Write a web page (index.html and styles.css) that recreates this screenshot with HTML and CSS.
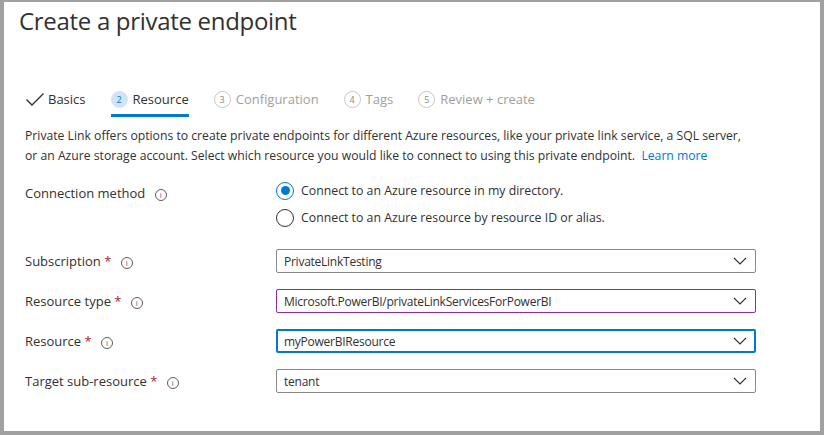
FILE: index.html
```html
<!DOCTYPE html>
<html>
<head>
<meta charset="utf-8">
<link rel="stylesheet" href="styles.css">
</head>
<body>
<div class="frame">
  <h1 class="title">Create a private endpoint</h1>
  <nav class="tabs">
    <div class="tab done">
      <svg class="check" width="20" height="16" viewBox="0 0 20 16"><path d="M1.5 8.5 L7 14 L18.5 2.5" fill="none" stroke="#323130" stroke-width="1.4"/></svg>
      <span>Basics</span>
    </div>
    <div class="tab active">
      <span class="num">2</span><span>Resource</span>
    </div>
    <div class="tab off">
      <span class="num">3</span><span>Configuration</span>
    </div>
    <div class="tab off">
      <span class="num">4</span><span>Tags</span>
    </div>
    <div class="tab off">
      <span class="num">5</span><span>Review + create</span>
    </div>
  </nav>
  <p class="desc">Private Link offers options to create private endpoints for different Azure resources, like your private link service, a SQL server, or an Azure storage account. Select which resource you would like to connect to using this private endpoint.&nbsp;&nbsp;<a class="link">Learn more</a></p>

  <div class="form">
    <div class="row row-radio">
      <div class="label">Connection method <span class="info">i</span></div>
      <div class="radios">
        <label class="radio"><span class="dot on"></span>Connect to an Azure resource in my directory.</label>
        <label class="radio"><span class="dot"></span>Connect to an Azure resource by resource ID or alias.</label>
      </div>
    </div>
    <div class="row">
      <div class="label">Subscription <span class="req">*</span> <span class="info">i</span></div>
      <div class="select"><span>PrivateLinkTesting</span><svg class="chev" width="14" height="8" viewBox="0 0 14 8"><path d="M1 1 L7 7 L13 1" fill="none" stroke="#323130" stroke-width="1.1"/></svg></div>
    </div>
    <div class="row">
      <div class="label">Resource type <span class="req">*</span> <span class="info">i</span></div>
      <div class="select purple"><span>Microsoft.PowerBI/privateLinkServicesForPowerBI</span><svg class="chev" width="14" height="8" viewBox="0 0 14 8"><path d="M1 1 L7 7 L13 1" fill="none" stroke="#323130" stroke-width="1.1"/></svg></div>
    </div>
    <div class="row">
      <div class="label">Resource <span class="req">*</span> <span class="info">i</span></div>
      <div class="select focus"><span>myPowerBIResource</span><svg class="chev" width="14" height="8" viewBox="0 0 14 8"><path d="M1 1 L7 7 L13 1" fill="none" stroke="#323130" stroke-width="1.1"/></svg></div>
    </div>
    <div class="row">
      <div class="label">Target sub-resource <span class="req">*</span> <span class="info">i</span></div>
      <div class="select"><span>tenant</span><svg class="chev" width="14" height="8" viewBox="0 0 14 8"><path d="M1 1 L7 7 L13 1" fill="none" stroke="#323130" stroke-width="1.1"/></svg></div>
    </div>
  </div>
</div>
</body>
</html>
```
FILE: styles.css
```css
* { box-sizing: border-box; }
html, body { margin: 0; padding: 0; }
body {
  width: 824px;
  height: 435px;
  background: #a0a0a0;
  font-family: "Open Sans", "Noto Sans", sans-serif;
  color: #323130;
  overflow: hidden;
}
.frame {
  margin: 2px 4px 0 4px;
  width: 816px;
  height: 429px;
  background: #fff;
  padding: 0 0 0 21px;
}
.title {
  margin: 0 0 0 -6px;
  padding-top: 3px;
  font-size: 24px;
  line-height: 32px;
  font-weight: 400;
  color: #323130;
  letter-spacing: -0.3px;
}
.tabs {
  display: flex;
  align-items: center;
  margin-top: 46px;
  height: 32px;
  font-size: 13px;
}
.tab {
  display: flex;
  align-items: center;
  height: 32px;
  margin-right: 25px;
  position: relative;
}
.tab .check { margin-right: 3px; }
.tab.active::after {
  content: "";
  position: absolute;
  left: 0; right: 0; bottom: -2px;
  height: 3px;
  background: #0078d4;
}
.num {
  display: inline-flex;
  align-items: center;
  justify-content: center;
  width: 17px;
  height: 17px;
  border-radius: 50%;
  font-size: 9px;
  margin-right: 5px;
}
.active .num { background: #cfe4fa; color: #0078d4; border: 1px solid #cfe4fa; }
.off { color: #a19f9d; }
.off .num { border: 1px solid #c8c6c4; color: #8a8886; }
.desc {
  margin: 11px 0 0 0;
  font-size: 12.2px;
  line-height: 20px;
  width: 728px;
}
.link { color: #0078d4; }
.form { margin-top: 15px; }
.row {
  display: flex;
  align-items: center;
  height: 24px;
  margin-bottom: 16px;
  font-size: 13px;
}
.row-radio { height: auto; align-items: flex-start; margin-bottom: 22px; }
.row-radio .label { padding-top: 3px; }
.label { width: 251px; flex: none; }
.req { color: #a4262c; }
.info {
  display: inline-flex;
  align-items: center;
  justify-content: center;
  width: 12px;
  height: 12px;
  border: 1px solid #605e5c;
  border-radius: 50%;
  font-size: 8px;
  color: #605e5c;
  margin-left: 6px;
  vertical-align: 0px;
}
.radios { display: flex; flex-direction: column; gap: 8px; font-size: 12.3px; }
.radio { display: flex; align-items: center; height: 19px; }
.dot {
  width: 18px; height: 18px;
  border: 1px solid #323130;
  border-radius: 50%;
  margin-right: 7px;
  display: inline-flex; align-items: center; justify-content: center;
  flex: none;
}
.dot.on { border-color: #0078d4; }
.dot.on::after { content: ""; width: 9px; height: 9px; border-radius: 50%; background: #0078d4; }
.select {
  width: 480px;
  height: 24px;
  border: 1px solid #8a8886;
  border-radius: 2px;
  display: flex;
  align-items: center;
  justify-content: space-between;
  padding: 0 8px 0 7px;
  font-size: 12px;
  letter-spacing: -0.25px;
}
.select.purple { border-color: #8b2ea5; }
.select.focus { border: 2px solid #0078d4; padding-left: 6px; padding-right: 7px; }
```
